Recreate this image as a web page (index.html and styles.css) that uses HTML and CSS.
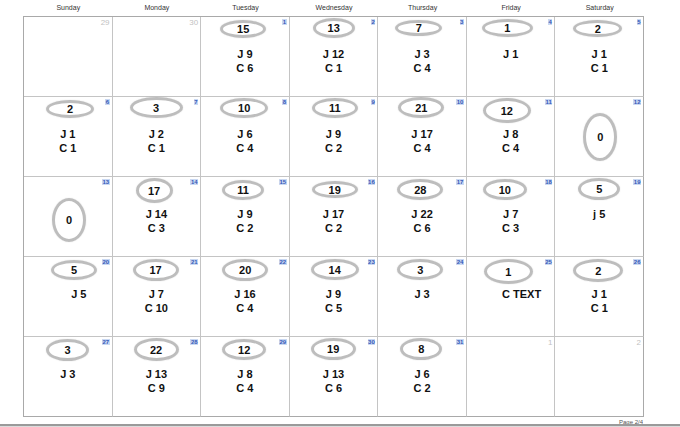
FILE: index.html
```html
<!DOCTYPE html>
<html>
<head>
<meta charset="utf-8">
<title>Calendar</title>
<link rel="stylesheet" href="styles.css">
</head>
<body>
<div class="page">
  <div class="weekdays">
    <div>Sunday</div><div>Monday</div><div>Tuesday</div><div>Wednesday</div><div>Thursday</div><div>Friday</div><div>Saturday</div>
  </div>
  <div class="month">
    <!-- week 1 -->
    <div class="cell"><span class="other">29</span></div>
    <div class="cell"><span class="other">30</span></div>
    <div class="cell"><span class="date">1</span><div class="ring" style="left:19px;top:3px;width:46px;height:18px">15</div><div class="tally">J 9<br>C 6</div></div>
    <div class="cell"><span class="date">2</span><div class="ring" style="left:23px;top:1px;width:42px;height:20px">13</div><div class="tally">J 12<br>C 1</div></div>
    <div class="cell"><span class="date">3</span><div class="ring" style="left:17px;top:3px;width:47px;height:16px">7</div><div class="tally">J 3<br>C 4</div></div>
    <div class="cell"><span class="date">4</span><div class="ring" style="left:15px;top:2px;width:51px;height:18px">1</div><div class="tally">J 1</div></div>
    <div class="cell"><span class="date">5</span><div class="ring" style="left:18px;top:3px;width:49px;height:17px">2</div><div class="tally">J 1<br>C 1</div></div>
    <!-- week 2 -->
    <div class="cell"><span class="date">6</span><div class="ring" style="left:22px;top:3px;width:48px;height:18px">2</div><div class="tally">J 1<br>C 1</div></div>
    <div class="cell"><span class="date">7</span><div class="ring" style="left:17px;top:0px;width:53px;height:21px">3</div><div class="tally">J 2<br>C 1</div></div>
    <div class="cell"><span class="date">8</span><div class="ring" style="left:19px;top:1px;width:48px;height:20px">10</div><div class="tally">J 6<br>C 4</div></div>
    <div class="cell"><span class="date">9</span><div class="ring" style="left:22px;top:1px;width:46px;height:20px">11</div><div class="tally">J 9<br>C 2</div></div>
    <div class="cell"><span class="date">10</span><div class="ring" style="left:20px;top:0px;width:46px;height:21px">21</div><div class="tally">J 17<br>C 4</div></div>
    <div class="cell"><span class="date">11</span><div class="ring" style="left:16px;top:1px;width:48px;height:25px">12</div><div class="tally">J 8<br>C 4</div></div>
    <div class="cell"><span class="date">12</span><div class="ring" style="left:28px;top:16px;width:34px;height:48px">0</div></div>
    <!-- week 3 -->
    <div class="cell"><span class="date">13</span><div class="ring" style="left:28px;top:21px;width:34px;height:44px">0</div></div>
    <div class="cell"><span class="date">14</span><div class="ring" style="left:23px;top:1px;width:37px;height:25px">17</div><div class="tally">J 14<br>C 3</div></div>
    <div class="cell"><span class="date">15</span><div class="ring" style="left:21px;top:3px;width:42px;height:20px">11</div><div class="tally">J 9<br>C 2</div></div>
    <div class="cell"><span class="date">16</span><div class="ring" style="left:22px;top:4px;width:46px;height:17px">19</div><div class="tally">J 17<br>C 2</div></div>
    <div class="cell"><span class="date">17</span><div class="ring" style="left:19px;top:2px;width:46px;height:21px">28</div><div class="tally">J 22<br>C 6</div></div>
    <div class="cell"><span class="date">18</span><div class="ring" style="left:16px;top:2px;width:44px;height:21px">10</div><div class="tally">J 7<br>C 3</div></div>
    <div class="cell"><span class="date">19</span><div class="ring" style="left:23px;top:1px;width:42px;height:22px">5</div><div class="tally">j 5</div></div>
    <!-- week 4 -->
    <div class="cell"><span class="date">20</span><div class="ring" style="left:27px;top:3px;width:46px;height:20px">5</div><div class="tally shifted">J 5</div></div>
    <div class="cell"><span class="date">21</span><div class="ring" style="left:20px;top:2px;width:46px;height:22px">17</div><div class="tally">J 7<br>C 10</div></div>
    <div class="cell"><span class="date">22</span><div class="ring" style="left:21px;top:2px;width:46px;height:22px">20</div><div class="tally">J 16<br>C 4</div></div>
    <div class="cell"><span class="date">23</span><div class="ring" style="left:21px;top:2px;width:48px;height:21px">14</div><div class="tally">J 9<br>C 5</div></div>
    <div class="cell"><span class="date">24</span><div class="ring" style="left:19px;top:2px;width:46px;height:21px">3</div><div class="tally">J 3</div></div>
    <div class="cell"><span class="date">25</span><div class="ring" style="left:17px;top:2px;width:49px;height:25px">1</div><div class="tally shifted">C TEXT</div></div>
    <div class="cell"><span class="date">26</span><div class="ring" style="left:18px;top:2px;width:50px;height:23px">2</div><div class="tally">J 1<br>C 1</div></div>
    <!-- week 5 -->
    <div class="cell"><span class="date">27</span><div class="ring" style="left:22px;top:2px;width:43px;height:22px">3</div><div class="tally">J 3</div></div>
    <div class="cell"><span class="date">28</span><div class="ring" style="left:21px;top:1px;width:45px;height:23px">22</div><div class="tally">J 13<br>C 9</div></div>
    <div class="cell"><span class="date">29</span><div class="ring" style="left:21px;top:2px;width:44px;height:21px">12</div><div class="tally">J 8<br>C 4</div></div>
    <div class="cell"><span class="date">30</span><div class="ring" style="left:21px;top:1px;width:45px;height:22px">19</div><div class="tally">J 13<br>C 6</div></div>
    <div class="cell"><span class="date">31</span><div class="ring" style="left:22px;top:1px;width:42px;height:22px">8</div><div class="tally">J 6<br>C 2</div></div>
    <div class="cell"><span class="other">1</span></div>
    <div class="cell"><span class="other">2</span></div>
  </div>
  <div class="footer">
    <div class="pagenum">Page 2/4</div>
    <div class="rule"></div>
  </div>
</div>
</body>
</html>
```

FILE: styles.css
```css
html, body {
  margin: 0;
  padding: 0;
  background: #ffffff;
  overflow: hidden;
}

.page {
  width: 680px;
  height: 427px;
  display: flex;
  flex-direction: column;
  font-family: "Liberation Sans", Arial, sans-serif;
}

.weekdays {
  margin-left: 23px;
  width: 620px;
  padding-left: 1px;
  height: 16px;
  display: grid;
  grid-template-columns: repeat(7, 1fr);
  font-size: 7px;
  line-height: 16px;
  color: #333333;
  text-align: center;
}

.month {
  margin-left: 23px;
  width: 620px;
  display: grid;
  grid-template-columns: repeat(7, 1fr);
  grid-template-rows: repeat(5, 80px);
  border-top: 1px solid #a9a9a9;
  border-left: 1px solid #a9a9a9;
}

.cell {
  position: relative;
  box-sizing: border-box;
  border-right: 1px solid #c4c4c4;
  border-bottom: 1px solid #c4c4c4;
  display: flex;
  flex-direction: column;
  align-items: center;
  padding-top: 30px;
}

.cell:nth-child(7n) {
  border-right-color: #a9a9a9;
}

.cell:nth-last-child(-n+7) {
  border-bottom-color: #a9a9a9;
}

.date {
  position: absolute;
  top: 2px;
  right: 2px;
  font-size: 6px;
  line-height: 6px;
  font-weight: bold;
  color: #3558b8;
  background: #c9d8f2;
  padding: 0 0.5px;
}

.other {
  position: absolute;
  top: 2px;
  right: 2px;
  font-size: 8px;
  line-height: 8px;
  color: #c2c2c2;
}

.ring {
  position: absolute;
  box-sizing: border-box;
  border: 3px solid #bdbdbd;
  border-radius: 50%;
  display: flex;
  align-items: center;
  justify-content: center;
  font-size: 11px;
  font-weight: bold;
  color: #111111;
  box-shadow: 0 0 1px rgba(150, 150, 150, 0.5);
}

.tally {
  font-size: 11px;
  line-height: 14px;
  font-weight: bold;
  color: #111111;
  text-align: center;
}

.tally.shifted {
  padding-left: 22px;
}

.footer {
  flex: 1;
  display: flex;
  flex-direction: column;
  justify-content: flex-end;
}

.pagenum {
  width: 643px;
  text-align: right;
  font-size: 6px;
  line-height: 5px;
  height: 4px;
  overflow: hidden;
  color: #555555;
}

.rule {
  height: 3px;
  border-top: 2px solid #9a9a9a;
  background: #dcdcdc;
  box-sizing: border-box;
}
```
